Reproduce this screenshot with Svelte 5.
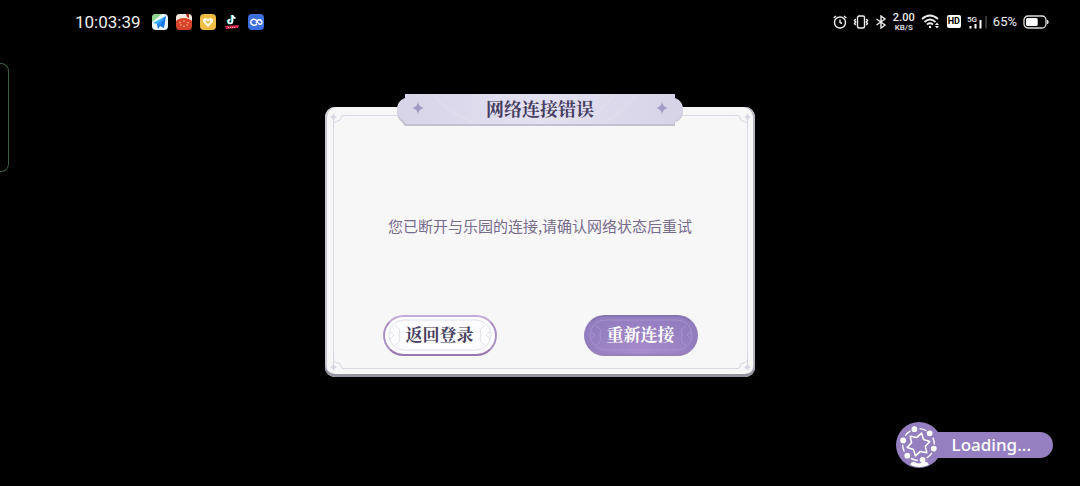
<script lang="ts">
  interface Props {
    time?: string;
    title?: string;
    message?: string;
    battery?: number;
  }

  let {
    time = '10:03:39',
    title = '网络连接错误',
    message = '您已断开与乐园的连接,请确认网络状态后重试',
    battery = 65
  }: Props = $props();

  const corners = ['top-left', 'top-right', 'bottom-right', 'bottom-left'];

  // loading emblem: six beads on a ring around a star
  const beads = [0, 1, 2, 3, 4, 5].map((i) => {
    const a = ((i * 60 - 105) * Math.PI) / 180;
    return { x: 22 + 15.5 * Math.cos(a), y: 22 + 15.5 * Math.sin(a) };
  });
  const star = Array.from({ length: 12 }, (_, i) => {
    const a = ((i * 30 - 75) * Math.PI) / 180;
    const r = i % 2 ? 7 : 11.5;
    return `${22 + r * Math.cos(a)},${22 + r * Math.sin(a)}`;
  }).join(' ');
</script>

{#snippet sparkle()}
  <svg class="sparkle" viewBox="0 0 12 12" aria-hidden="true">
    <path d="M6 0Q6.8 5.2 12 6Q6.8 6.8 6 12Q5.2 6.8 0 6Q5.2 5.2 6 0Z" />
  </svg>
{/snippet}

{#snippet buttonTrim()}
  <svg class="trim" viewBox="0 0 114 41" preserveAspectRatio="none" aria-hidden="true">
    <rect x="6" y="5" width="102" height="30" rx="15" />
    <path d="M12 11Q19 14 16 20Q19 27 12 30M7 17L11 20L7 24M102 11Q95 14 98 20Q95 27 102 30M107 17L103 20L107 24" />
  </svg>
{/snippet}

<div class="screen">
  <header class="status-bar">
    <div class="status-group apps">
      <time>{time}</time>
      <svg class="app" viewBox="0 0 16 16" aria-hidden="true">
        <rect width="16" height="16" rx="4" fill="#e9f6fb" />
        <path d="M0 8V4Q0 0 4 0H10Z" fill="#8ed58b" />
        <path d="M14 2L1 9L5 10Z" fill="#35b7f4" />
        <path d="M14 2L5 10L6 15L8 12L12 14Z" fill="#1674ec" />
        <path d="M14 2L5 10L8 12Z" fill="#2b91f5" />
      </svg>
      <svg class="app" viewBox="0 0 16 16" aria-hidden="true">
        <rect width="16" height="16" rx="4" fill="#d7432a" />
        <path d="M0 7V4Q0 0 4 0H12Q16 0 16 4V7Q13 4 8 4Q3 4 0 7Z" fill="#f4e9df" />
        <path d="M10 0H13V4L11 3Z" fill="#b92d20" />
        <path d="M3 9L5 8M7 7L9 7M11 8L13 9M4 11H6M10 11H12M7 12Q8 13 9 12" stroke="#ffb27c" fill="none" />
      </svg>
      <svg class="app" viewBox="0 0 16 16" aria-hidden="true">
        <rect width="16" height="16" rx="4" fill="#efbd45" />
        <path d="M8 13L3 8Q2 5 5 4Q7 4 8 5Q9 4 11 4Q14 5 13 8Z" fill="#fff8df" />
        <path d="M6 7L8 9L10 7" stroke="#e9b33b" stroke-width="1.3" fill="none" />
      </svg>
      <svg class="app" viewBox="0 0 16 16" aria-hidden="true">
        <path d="M7.500 1V7A2 2 0 1 1 5.500 5.500M7.500 1Q8 4 10.500 4" stroke="#28dce2" stroke-width="1.600" fill="none" />
        <path d="M8.500 1V7.500A2 2 0 1 1 6.500 5.500M8.500 1Q9 4 11.500 4" stroke="#fff" stroke-width="1.600" fill="none" />
        <path d="M1 12L15 11L14 14L2 15Z" fill="#db294e" />
        <path d="M4 13.500H12" stroke="#f8b2bf" stroke-dasharray="1 1" />
      </svg>
      <svg class="app" viewBox="0 0 16 16" aria-hidden="true">
        <rect width="16" height="16" rx="4" fill="#3d70df" />
        <path d="M9 10Q7 12 5 11Q2 10 3 7Q5 4 8 6L11 10Q14 11 14 8Q13 5 10 6L8 9" stroke="#fff" stroke-width="1.400" fill="none" />
      </svg>
    </div>

    <div class="status-group system">
      <svg width="14" height="14" viewBox="0 0 14 14" class="line" aria-label="alarm">
        <circle cx="7" cy="7.500" r="5.500" />
        <path d="M7 4.500V7.500L9 8.500M.7 3L3 1M13.300 3L11 1" />
      </svg>
      <svg width="16" height="14" viewBox="0 0 16 14" class="line" aria-label="vibrate">
        <rect x="4.500" y="1" width="7" height="12" rx="1.500" />
        <path d="M2.700 4L1.500 5.500L2.700 7L1.500 8.500L2.700 10M13.300 4L14.500 5.500L13.300 7L14.500 8.500L13.300 10" />
      </svg>
      <svg width="12" height="14" viewBox="0 0 12 14" class="line" aria-label="bluetooth">
        <path d="M1.500 4L10 10L6 13V1L10 4L1.500 10" />
      </svg>
      <div class="speed"><b>2.00</b><span>KB/S</span></div>
      <svg width="20" height="15" viewBox="0 0 20 15" class="line" aria-label="wifi">
        <path d="M1 5Q9 -2 17 5M3.500 8Q9 3 14.500 8M6 10.500Q9 8 12 10.500" stroke-width="1.700" />
        <circle cx="9" cy="13" r="1.200" class="solid" />
        <path d="M14 11L16 8.500L18 11ZM14 12L16 14.500L18 12Z" class="solid" />
      </svg>
      <span class="hd">HD</span>
      <svg width="20" height="14" viewBox="0 0 20 14" aria-label="5G signal">
        <text x="0" y="7" class="network">5G</text>
        <path d="M3.500 11V13.500M8.500 9V13.500M13.500 5V13.500" stroke="#fff" stroke-width="2" />
        <path d="M19 1V13.500" stroke="#333" stroke-width="2" />
      </svg>
      <span class="percent">{battery}%</span>
      <svg width="26" height="14" viewBox="0 0 26 14" aria-label="battery">
        <rect x="1" y="1" width="22" height="12" rx="4" fill="none" stroke="#ddd" stroke-width="1.300" />
        <rect x="3" y="3" width={(18 * battery) / 100} height="8" rx="1.500" fill="#fff" />
        <path d="M24.500 5Q26 7 24.500 9Z" fill="#ddd" stroke="#ddd" />
      </svg>
    </div>
  </header>

  <div class="edge-handle"></div>

  <main>
    <div class="dialog" role="alertdialog" aria-labelledby="dialog-title" aria-describedby="dialog-message">
      <div class="frame" aria-hidden="true">
        {#each corners as corner}
          <svg class="corner {corner}" viewBox="0 0 16 16">
            <path d="M16 3.500H13Q11 4 10.500 7Q9.500 10 7 9L5 10.500H3.500V16M3.500 10V6" />
            <path class="corner-star" d="M3.500 1Q4 4 7 5Q4 6 3.500 9Q3 6 0 5Q3 4 3.500 1Z" />
          </svg>
        {/each}
      </div>

      <div class="banner">
        <svg class="banner-shape" viewBox="0 0 286 32" preserveAspectRatio="none" aria-hidden="true">
          <defs>
            <linearGradient id="banner-fill">
              <stop offset="0" stop-color="#d6d4e6" />
              <stop offset=".5" stop-color="#e3e0f2" />
              <stop offset="1" stop-color="#d6d3e6" />
            </linearGradient>
          </defs>
          <path d="M8 2H278V6Q286 8 286 17Q286 26 278 28V32H8L5 28Q0 25 0 17Q0 8 8 5Z" fill="#c3c0d1" />
          <path d="M8 0H278V4Q286 7 286 15Q286 24 279 27L277 30H9L7 27Q0 24 0 15Q0 7 8 4Z" fill="url(#banner-fill)" />
          <path d="M38 1Q47 18 78 29M205 29Q224 20 239 1M84 29L102 1M190 29L218 1" fill="none" stroke="#eeecf7" opacity=".4" />
        </svg>
        {@render sparkle()}
        <h1 id="dialog-title">{title}</h1>
        {@render sparkle()}
      </div>

      <p id="dialog-message">{message}</p>

      <div class="actions">
        <button type="button" class="secondary">
          {@render buttonTrim()}
          <span>返回登录</span>
        </button>
        <button type="button" class="primary">
          {@render buttonTrim()}
          <span>重新连接</span>
        </button>
      </div>
    </div>
  </main>

  <footer>
    <div class="loading" role="status">
      <svg class="emblem" viewBox="0 0 45 45" aria-hidden="true">
        <circle cx="22.500" cy="22.500" r="22.500" fill="#957fc0" />
        <circle cx="22" cy="22" r="15.500" fill="none" stroke="#fff" stroke-width="1.300" stroke-dasharray="7 9.230" stroke-dashoffset="-8.700" />
        <polygon points={star} fill="none" stroke="#fff" stroke-width="1.500" stroke-linejoin="round" />
        {#each beads as bead}
          <circle cx={bead.x} cy={bead.y} r="2.800" fill="#fff" />
        {/each}
        <path d="M14 42Q15 38 18 39Q22 42 27 39Q31 38 32 42Q23 46 14 42Z" fill="#fff" />
      </svg>
      <span>Loading...</span>
    </div>
  </footer>
</div>

<style>
  :global(body) {
    margin: 0;
    background: #000;
  }

  .screen {
    position: relative;
    display: flex;
    flex-direction: column;
    min-height: 100vh;
    background: #000;
    font-family: Roboto, 'Noto Sans CJK SC', sans-serif;
    overflow: hidden;
  }

  .status-bar {
    display: flex;
    align-items: center;
    justify-content: space-between;
    height: 43px;
    padding: 0 31px 0 75px;
    color: #eee;
  }
  .status-group {
    display: flex;
    align-items: center;
  }
  .apps {
    gap: 8px;
  }
  time {
    margin-right: 3px;
    font-size: 17px;
    line-height: 20px;
  }
  .app {
    width: 16px;
    height: 16px;
  }
  .system {
    gap: 6px;
  }
  .line {
    fill: none;
    stroke: #eee;
    stroke-width: 1.4;
  }
  .solid {
    fill: #eee;
    stroke: none;
  }
  .speed {
    display: flex;
    flex-direction: column;
    align-items: center;
    font-size: 8px;
    font-weight: 500;
    line-height: 9px;
  }
  .speed b {
    font-size: 11px;
    font-weight: 500;
    line-height: 11px;
  }
  .hd {
    padding: 0 1px;
    border-radius: 2px;
    background: #fff;
    color: #000;
    font-size: 9px;
    font-weight: 700;
    line-height: 13px;
  }
  .network {
    fill: #eee;
    font-size: 8px;
    font-weight: 500;
  }
  .percent {
    font-size: 13px;
    line-height: 16px;
  }

  /* sidebar pull tab at the screen edge */
  .edge-handle {
    position: absolute;
    top: 63px;
    left: 0;
    width: 8px;
    height: 107px;
    border: 1px solid #3c5c45;
    border-left: 0;
    border-radius: 0 8px 8px 0;
  }

  main {
    flex: 1;
    display: flex;
    align-items: center;
    justify-content: center;
    padding: 18px 16px 0;
  }

  .dialog {
    position: relative;
    display: flex;
    flex-direction: column;
    align-items: center;
    box-sizing: border-box;
    width: 100%;
    max-width: 430px;
    padding-bottom: 21px;
    border-radius: 10px;
    background: #f7f7f8;
    box-shadow:
      inset 0 -3px 0 #9693a1,
      inset -2px 0 0 #b8b5c3,
      inset 2px 0 0 #c9c7d2;
  }

  .frame {
    position: absolute;
    inset: 8px 7px 8px 8px;
    border: 1px solid #dcd9e5;
    pointer-events: none;
  }
  .corner {
    position: absolute;
    width: 16px;
    height: 16px;
    background: #f7f7f8;
    fill: none;
    stroke: #d8d4e4;
  }
  .corner-star {
    fill: #d8d4e4;
    stroke: none;
  }
  .top-left {
    top: -4px;
    left: -4px;
  }
  .top-right {
    top: -4px;
    right: -4px;
    transform: scaleX(-1);
  }
  .bottom-right {
    right: -4px;
    bottom: -4px;
    transform: scale(-1);
  }
  .bottom-left {
    bottom: -4px;
    left: -4px;
    transform: scaleY(-1);
  }

  .banner {
    position: relative;
    display: flex;
    align-items: center;
    justify-content: space-between;
    box-sizing: border-box;
    width: 286px;
    max-width: 90%;
    height: 32px;
    margin-top: -13px;
    padding: 0 15px 3px;
  }
  .banner-shape {
    position: absolute;
    inset: 0;
    width: 100%;
    height: 100%;
  }
  .sparkle {
    position: relative;
    width: 12px;
    height: 12px;
    fill: #a19bc6;
  }
  h1 {
    position: relative;
    margin: 0;
    color: #463d60;
    font-family: 'Noto Serif CJK SC', 'Noto Sans CJK SC', serif;
    font-size: 18px;
    font-weight: 700;
    line-height: 24px;
  }

  #dialog-message {
    margin: 88px 24px 77px;
    color: #776c8c;
    font-family: 'Noto Sans CJK SC', sans-serif;
    font-size: 15px;
    line-height: 24px;
    text-align: center;
  }

  .actions {
    display: flex;
    gap: 87px;
  }
  button {
    position: relative;
    width: 114px;
    height: 41px;
    padding: 0 0 2px;
    border: 2px solid #9c83bd;
    border-radius: 21px;
    font-family: 'Noto Serif CJK SC', 'Noto Sans CJK SC', serif;
    font-size: 17px;
    font-weight: 700;
    line-height: 24px;
    cursor: pointer;
  }
  button span {
    position: relative;
  }
  .trim {
    position: absolute;
    inset: -2px;
    width: 114px;
    height: 41px;
    fill: none;
    stroke: #e4dfea;
  }
  .secondary {
    border-color: #c3abd8 #ab8fc4 #9779ae;
    background: #fdfcfe;
    color: #463d60;
  }
  .primary {
    border-color: #8874b0 #937cbd #9a80b8;
    background: radial-gradient(ellipse at 50% 100%, #a98bcb, #937ec0 75%);
    color: #fff;
  }
  .primary .trim {
    stroke: #a892cd;
  }

  footer {
    display: flex;
    justify-content: flex-end;
    padding: 0 27px 18px;
  }
  .loading {
    display: flex;
    align-items: center;
    color: #fff;
    font-family: 'Noto Sans', sans-serif;
    font-size: 17px;
    font-weight: 500;
    line-height: 26px;
  }
  .emblem {
    position: relative;
    z-index: 1;
    width: 46px;
    height: 46px;
  }
  .loading span {
    margin-left: -12px;
    padding: 0 22px;
    border-radius: 0 13px 13px 0;
    background: #957fc0;
  }
</style>
